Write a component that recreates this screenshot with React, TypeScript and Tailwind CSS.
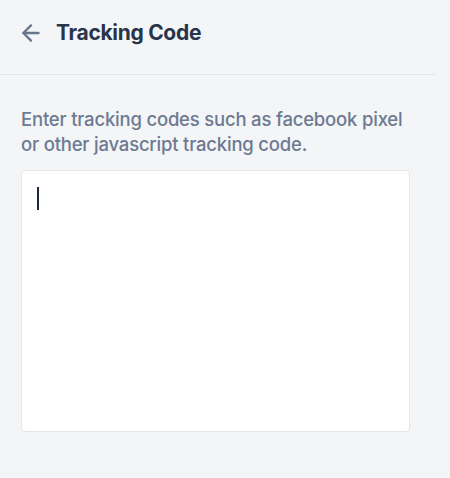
import { ArrowLeft } from "lucide-react";

const App = () => {
  return (
    <div
      className="min-h-[478px] w-[450px] bg-[#f4f5f7]"
      style={{ fontFamily: "Inter, 'Noto Sans', sans-serif" }}
    >
      <div className="w-[435px]">
        {/* header */}
        <div className="flex h-[75px] items-center gap-[12px] border-b border-[#e3e5e9] px-[18px] pb-[9px]">
          <ArrowLeft className="h-[26px] w-[26px] text-[#67758d]" strokeWidth={2.1} />
          <span className="text-[21px] font-bold tracking-[-0.3px] text-[#28344a]">
            Tracking Code
          </span>
        </div>

        <div className="px-[21px] pt-[32px]">
          <p className="text-[18.5px] font-medium leading-[25px] tracking-[-0.2px] text-[#6c7a92]">
            Enter tracking codes such as facebook pixel or other javascript tracking code.
          </p>

          <div className="mt-[13px] h-[262px] w-[389px] rounded-[4px] border border-[#e4e6ea] bg-white px-[15px] pt-[16px]">
            <div className="h-[23px] w-[2px] bg-[#1f2a3c]" />
          </div>
        </div>
      </div>
    </div>
  );
};

export default App;
